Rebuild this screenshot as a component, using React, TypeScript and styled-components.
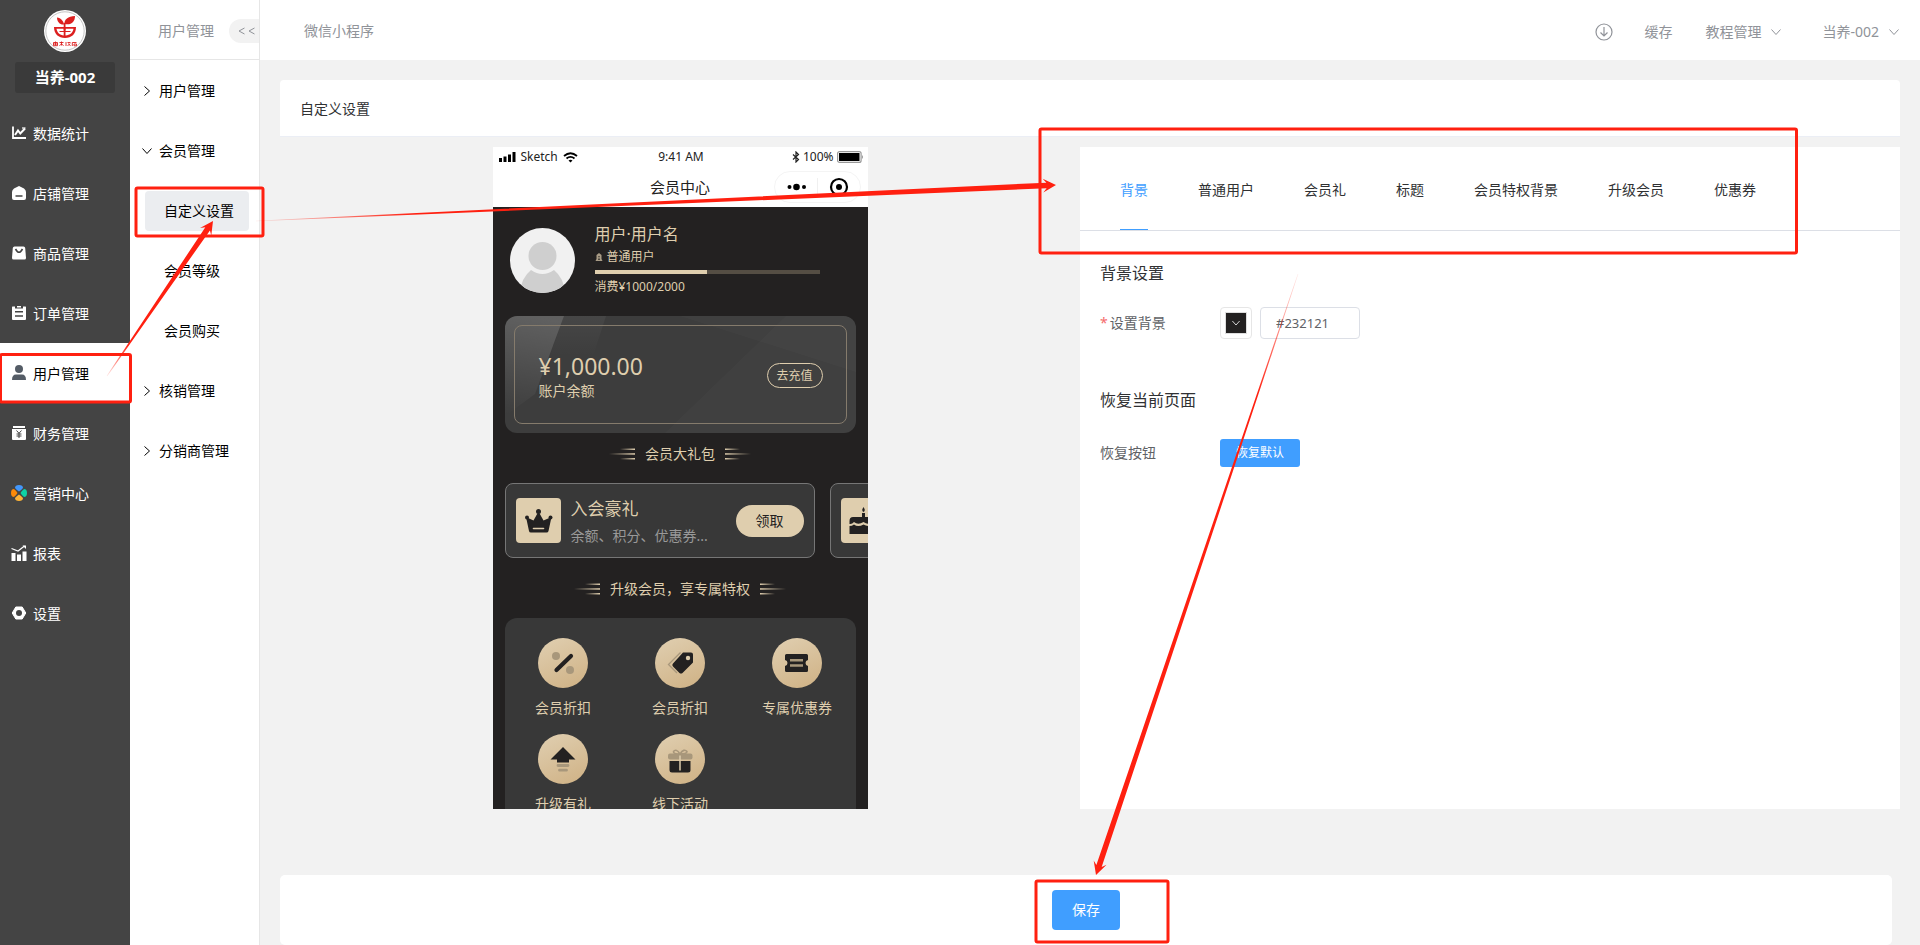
import React, { useState } from "react";
import styled, { createGlobalStyle, css } from "styled-components";

const GlobalStyle = createGlobalStyle`
  *, *::before, *::after { box-sizing: border-box; }
  body {
    margin: 0;
    background: #f2f2f2;
    color: #303133;
    font-family: "Noto Sans", "Noto Sans CJK SC", sans-serif;
    font-size: 14px;
    line-height: 20px;
  }
  button, input { font: inherit; }
  button { border: 0; padding: 0; background: none; color: inherit; cursor: pointer; }
  a { color: inherit; text-decoration: none; }
  h1, h2, p, ul { margin: 0; padding: 0; font-weight: 400; }
  ul { list-style: none; }
`;

const gold = "#dfceae";

/* ---------- Shell ---------- */

const Shell = styled.div`
  position: relative;
  display: flex;
  min-height: 100vh;
  overflow: hidden;
`;

const Sidebar = styled.aside`
  flex: none;
  width: 130px;
  background: #444;
  color: #fff;
`;

const Brand = styled.div`
  display: flex;
  flex-direction: column;
  align-items: center;
  gap: 10px;
  padding: 10px 15px;
`;

const ShopName = styled.strong`
  width: 100%;
  border-radius: 3px;
  background: #3a3a3a;
  font-size: 15px;
  line-height: 31px;
  text-align: center;
`;

const NavLink = styled.a<{ $active?: boolean }>`
  display: flex;
  align-items: center;
  gap: 6px;
  height: 60px;
  padding-left: 11px;
  ${(p) => p.$active && css`background: #fff; color: #000;`}
  svg { flex: none; }
  span { padding-top: 2px; }
`;

const SubNav = styled.aside`
  flex: none;
  width: 130px;
  border-right: 1px solid #e6e6e6;
  background: #fff;
  color: #000;
`;

const SubHeader = styled.div`
  display: flex;
  align-items: center;
  justify-content: space-between;
  height: 60px;
  padding: 2px 0 0 28px;
  border-bottom: 1px solid #e6e6e6;
  color: #909399;
`;

const Collapse = styled.button`
  width: 30px;
  height: 24px;
  border-radius: 12px 0 0 12px;
  background: #f2f2f2;
  color: #909399;
  svg { display: block; margin-left: 9px; }
`;

const SubList = styled.nav`
  display: flex;
  flex-direction: column;
  padding-top: 1px;
`;

const Group = styled.a`
  display: flex;
  align-items: center;
  gap: 7px;
  height: 60px;
  padding-left: 12px;
`;

const SubItem = styled.a<{ $active?: boolean }>`
  height: 40px;
  margin: 10px 10px 10px 15px;
  padding-left: 19px;
  border-radius: 4px;
  line-height: 40px;
  ${(p) => p.$active && css`background: #ebedf0;`}
`;

/* ---------- Main ---------- */

const Main = styled.main`
  display: flex;
  flex: 1;
  flex-direction: column;
  min-width: 0;
`;

const TopBar = styled.header`
  display: flex;
  align-items: center;
  justify-content: space-between;
  height: 60px;
  padding: 2px 21px 0 44px;
  background: #fff;
  color: #909399;
`;

const TopActions = styled.div`
  display: flex;
  align-items: center;
  padding-top: 2px;
`;

const TopButton = styled.button<{ $gap?: number }>`
  display: flex;
  align-items: center;
  gap: 10px;
  margin-left: ${(p) => p.$gap ?? 0}px;
`;

const Content = styled.div`
  display: flex;
  flex: 1;
  flex-direction: column;
  padding: 20px 20px 0;
`;

const TitleCard = styled.div`
  padding: 19px 20px 17px;
  border-bottom: 1px solid #ebeef5;
  border-radius: 4px 4px 0 0;
  background: #fff;
`;

const Columns = styled.div`
  display: grid;
  grid-template-columns: 80fr 82fr;
  height: 662px;
  margin: 10px 0 66px;
`;

const Footer = styled.div`
  display: flex;
  justify-content: center;
  margin: auto 8px 0 0;
  padding: 15px;
  border-radius: 5px;
  background: #fff;
`;

const SaveButton = styled.button`
  width: 68px;
  height: 40px;
  border-radius: 4px;
  background: #409eff;
  color: #fff;
`;

/* ---------- Settings panel ---------- */

const Panel = styled.section`
  background: #fff;
`;

const TabList = styled.div`
  display: flex;
  gap: 50px;
  height: 84px;
  padding-left: 40px;
  border-bottom: 1px solid #dcdfe6;
`;

const Tab = styled.button<{ $active: boolean }>`
  padding-top: 4px;
  border-bottom: 1px solid ${(p) => (p.$active ? "#409eff" : "transparent")};
  color: ${(p) => (p.$active ? "#409eff" : "#303133")};
  white-space: nowrap;
`;

const Form = styled.form`
  display: flex;
  flex-direction: column;
  gap: 47px;
  padding: 30px 20px;
`;

const SectionTitle = styled.h2`
  font-size: 16px;
  line-height: 24px;
`;

const Field = styled.div<{ $height: number }>`
  display: flex;
  align-items: center;
  height: ${(p) => p.$height}px;
  margin-top: 20px;
  color: #606266;
`;

const Label = styled.label`
  width: 120px;
`;

const Required = styled.span`
  margin-right: 2px;
  color: #f56c6c;
`;

const Swatch = styled.button`
  display: flex;
  align-items: center;
  justify-content: center;
  width: 32px;
  height: 32px;
  margin-right: 8px;
  border: 1px solid #e6e6e6;
  border-radius: 4px;
  span {
    display: flex;
    align-items: center;
    justify-content: center;
    width: 22px;
    height: 22px;
    border: 1px solid #dedede;
    background: #232121;
    color: #fff;
  }
`;

const ColorInput = styled.input`
  width: 100px;
  height: 32px;
  padding: 0 15px;
  border: 1px solid #dcdfe6;
  border-radius: 4px;
  background: none;
  color: #606266;
  font-size: 13px;
`;

const ResetButton = styled.button`
  width: 80px;
  height: 28px;
  border-radius: 3px;
  background: #409eff;
  color: #fff;
  font-size: 12px;
`;

/* ---------- Phone preview ---------- */

const Phone = styled.section`
  width: 375px;
  height: 662px;
  margin: 0 auto;
  overflow: hidden;
  background: #232121;
  color: ${gold};
`;

const PhoneTop = styled.div`
  height: 60px;
  background: #fff;
  color: #222;
`;

const StatusBar = styled.div`
  display: grid;
  grid-template-columns: 1fr auto 1fr;
  align-items: center;
  height: 20px;
  padding: 0 4px 0 6px;
  font-size: 12px;
`;

const StatusGroup = styled.div<{ $end?: boolean }>`
  display: flex;
  align-items: center;
  justify-content: ${(p) => (p.$end ? "flex-end" : "flex-start")};
  gap: ${(p) => (p.$end ? 3 : 5)}px;
`;

const PhoneNav = styled.div`
  display: grid;
  grid-template-columns: 1fr auto 1fr;
  align-items: center;
  height: 40px;
  padding: 0 7px;
  h2 { grid-column: 2; font-size: 15px; }
`;

const Capsule = styled.svg`
  justify-self: end;
`;

const Profile = styled.div`
  display: flex;
  align-items: center;
  gap: 20px;
  padding: 15px 17px 0;
`;

const ProfileText = styled.div`
  width: 225px;
  font-size: 12px;
`;

const UserName = styled.p`
  font-size: 16px;
  line-height: 24px;
`;

const Level = styled.p`
  display: flex;
  align-items: center;
  gap: 4px;
  padding-bottom: 2px;
  line-height: 22px;
`;

const Progress = styled.div`
  height: 4px;
  background: #554e44;
  div { width: 50%; height: 4px; background: ${gold}; }
`;

const Spend = styled.p`
  padding-top: 1px;
  line-height: 24px;
`;

const Wallet = styled.div`
  position: relative;
  margin: 17px 12px 0;
  padding: 9px;
  overflow: hidden;
  border-radius: 12px;
  background: #3d3d3d;
`;

const WalletShine = styled.svg`
  position: absolute;
  inset: 0;
`;

const WalletInner = styled.div`
  position: relative;
  display: flex;
  align-items: center;
  justify-content: space-between;
  height: 99px;
  padding: 2px 23px 0 24px;
  border: 1px solid #857b6c;
  border-radius: 8px;
`;

const Amount = styled.p`
  font-size: 23px;
  line-height: 30px;
`;

const Recharge = styled.button`
  width: 56px;
  height: 25px;
  border: 1px solid ${gold};
  border-radius: 13px;
  font-size: 12px;
`;

const SectionBar = styled.div`
  display: flex;
  align-items: center;
  justify-content: center;
  gap: 10px;
  height: 42px;
`;

const Gifts = styled.div`
  display: flex;
  gap: 15px;
  margin: 8px 0 10px;
  padding-left: 12px;
`;

const GiftCard = styled.div`
  display: flex;
  flex: none;
  align-items: center;
  width: 310px;
  height: 75px;
  padding: 0 10px;
  border: 1px solid #767676;
  border-radius: 8px;
  background: #383838;
`;

const GiftIcon = styled.div`
  display: flex;
  width: 45px;
  height: 45px;
  margin-right: 10px;
  border-radius: 4px;
  background: ${gold};
`;

const GiftText = styled.div`
  flex: 1;
  padding-top: 2px;
  strong { display: block; font-size: 17px; font-weight: 400; line-height: 28px; }
  span { display: block; color: #999; line-height: 26px; }
`;

const Claim = styled.button`
  width: 68px;
  height: 32px;
  border-radius: 16px;
  background: ${gold};
  color: #232121;
`;

const Perks = styled.ul`
  display: grid;
  grid-template-columns: repeat(3, 1fr);
  margin: 8px 12px 0;
  padding: 20px 0;
  border-radius: 12px 12px 0 0;
  background: #383838;
`;

const Perk = styled.li`
  display: flex;
  flex-direction: column;
  align-items: center;
  gap: 10px;
  height: 96px;
`;

const PerkBadge = styled.div`
  width: 50px;
  height: 50px;
  border-radius: 50%;
  background: linear-gradient(155deg, #e0cfb1, #cfb184);
`;

/* ---------- Annotation layer ---------- */

const Notes = styled.svg`
  position: absolute;
  top: 0;
  left: 0;
  pointer-events: none;
`;

/* ---------- Icons ---------- */

const Logo = () => (
  <svg width="42" height="42" viewBox="0 0 42 42">
    <circle cx="21" cy="21" r="21" fill="#fff" />
    <circle cx="21" cy="21" r="19.2" fill="none" stroke="#aaa" strokeWidth="0.7" />
    <g fill="#dc1f1f">
      <path d="M20.5 14 C20 9.500 24 6.500 31 6 C31 12 27 15.500 20.500 14Z" />
      <path d="M20 14.500 C19.500 11 17 8 13 7.500 C13 12 16 15 20 14.500Z" />
      <path d="M10 17 H32 C32 24 27.500 28 21 28 S10 24 10 17Z" />
      <path d="M12.500 18.800 H19.700 V21 H15.500 V22 H19.700 V25.500 C16 25.200 13 22.500 12.500 18.800Z M21.500 18.800 H29.500 C29 22.500 26 25.200 21.500 25.500 V22 H26.500 V21 H21.500Z" fill="#fff" />
      <path d="M19.700 13 H21.500 V20.500 H19.700Z" />
    </g>
    <path d="M9.500 32.500h4v3.200h-4z M9.500 34h4 M11.500 31.500v4 M15.500 32.500h4 M17.500 31.500v4 M15.500 35.800l2-2 2 2 M22 32v4 M23.500 32.500h3 M24.500 33.500l2 2.500 M26 33.500l-2.500 2.500 M28.300 32.500h4.200 M28.300 32.500v3.500 M30 34h2.500v1.800h-2.500z" fill="none" stroke="#dc1f1f" strokeWidth="0.9" />
  </svg>
);

const navIcons: Record<string, React.ReactNode> = {
  stats: (
    <g fill="none" stroke="#fff" strokeWidth="1.800">
      <path d="M2 1.500V13H15" />
      <path d="M4 10 L7 5.500 L9.300 8.500 L14 3.500" strokeWidth="2" />
      <path d="M11 3h3.500" strokeWidth="1.200" />
    </g>
  ),
  shop: (
    <>
      <path d="M8 1 L13 3.500 Q15 5 15 7 V13 Q15 15 13 15 H3 Q1 15 1 13 V7 Q1 5 3 3.500Z" fill="#fff" />
      <path d="M4.500 11h7" stroke="#444" strokeWidth="1.500" />
    </>
  ),
  goods: (
    <>
      <path d="M3.500 1.500h9q1.500 0 1.700 1.500L15 13q0 1.500-1.500 1.500h-11Q1 14.500 1 13L1.800 3q.2-1.500 1.700-1.500Z" fill="#fff" />
      <path d="M4.500 4 Q8 10.500 11.500 4" fill="none" stroke="#444" strokeWidth="1.600" />
    </>
  ),
  orders: (
    <>
      <path d="M1.500 1.500h2.500v2h8v-2h2.500q.5 0 .5 1v11.500q0 1-1 1h-12q-1 0-1-1V2.500q0-1 .5-1Z M6 1h4v1.500H6z" fill="#fff" />
      <path d="M4 6.800h8 M4 11h8" stroke="#444" strokeWidth="1.500" />
    </>
  ),
  users: (
    <g fill="#545c66">
      <circle cx="8" cy="4" r="4" />
      <path d="M1 15 Q1 9.500 5 9.500 H11 Q15 9.500 15 15Z" />
    </g>
  ),
  finance: (
    <>
      <path d="M2 1h12v2H2z M1 4h14v10q0 1-1 1H2q-1 0-1-1Z" fill="#fff" />
      <path d="M5.500 5.500 L8 8.300 L10.500 5.500 M8 8.300V13 M5.500 9h5 M5.500 11h5" fill="none" stroke="#444" strokeWidth="1" />
    </>
  ),
  marketing: (
    <>
      <path d="M4 3 Q4 0 8 0 T12 3 Q10 5.500 8 6.500 Q6 5.500 4 3Z" fill="#4297fb" />
      <path d="M3 4 Q0 4 0 8 T3 12 Q5.500 10 6.500 8 Q5.500 6 3 4Z" fill="#fb8a0a" />
      <path d="M13 4 Q16 4 16 8 T13 12 Q10.500 10 9.500 8 Q10.500 6 13 4Z" fill="#0ed2a5" />
      <path d="M4 13 Q4 16 8 16 T12 13 Q10 10.500 8 9.500 Q6 10.500 4 13Z" fill="#fdb337" />
    </>
  ),
  report: (
    <>
      <path d="M0.500 8h4v8h-4z M6 9.500h4V16H6z M11.500 6.500h4V16h-4z" fill="#fff" />
      <path d="M0.500 3.500 L7 6 L13.500 1" fill="none" stroke="#fff" strokeWidth="1.200" />
      <path d="M11.500 0.500 H15 V4Z" fill="#fff" />
    </>
  ),
  settings: (
    <>
      <path d="M4.800 2h6.400L14.800 8l-3.600 6H4.800L1.200 8Z" fill="#fff" stroke="#fff" strokeLinejoin="round" />
      <circle cx="8" cy="8" r="3" fill="#444" />
    </>
  ),
};

const NavIcon = ({ name }: { name: string }) => (
  <svg width="16" height="16" viewBox="0 0 16 16">{navIcons[name]}</svg>
);

const Chevron = ({ down, size = 10 }: { down?: boolean; size?: number }) => (
  <svg width={size} height={size} viewBox="0 0 10 10" fill="none" stroke="currentColor">
    <path d={down ? "M0.500 2.500 L5 7.500 L9.500 2.500" : "M2.500 0.500 L7.500 5 L2.500 9.500"} />
  </svg>
);

const CollapseIcon = () => (
  <svg width="18" height="10" viewBox="0 0 18 10" fill="none" stroke="currentColor">
    <path d="M6.500 2 L1 5 L6.500 8 M16.500 2 L11 5 L16.500 8" />
  </svg>
);

const DownloadIcon = () => (
  <svg width="18" height="18" viewBox="0 0 18 18" fill="none" stroke="currentColor" strokeWidth="1.200">
    <circle cx="9" cy="9" r="8" />
    <path d="M9 4v9 M5.500 9.500 L9 13 L12.500 9.500" />
  </svg>
);

const Avatar = () => (
  <svg width="65" height="65" viewBox="0 0 65 65">
    <defs>
      <clipPath id="avatar"><circle cx="32.500" cy="32.500" r="32.500" /></clipPath>
    </defs>
    <g clipPath="url(#avatar)">
      <rect width="65" height="65" fill="#f1f1f1" />
      <circle cx="32.500" cy="28" r="14" fill="#cfcfcf" />
      <path d="M10 65 Q11 50 21 42 Q32.500 50 44 42 Q54 50 55 65Z" fill="#cfcfcf" />
    </g>
  </svg>
);

const Shine = () => (
  <WalletShine width="351" height="117" viewBox="0 0 351 117">
    <defs>
      <linearGradient id="shine" x1="0.3" y1="0" x2="0.2" y2="1">
        <stop offset="0" stopColor="#fff" stopOpacity="0.180" />
        <stop offset="1" stopColor="#fff" stopOpacity="0" />
      </linearGradient>
      <linearGradient id="shineSoft" x1="0" y1="0" x2="0" y2="1">
        <stop offset="0" stopColor="#fff" stopOpacity="0.050" />
        <stop offset="1" stopColor="#fff" stopOpacity="0" />
      </linearGradient>
    </defs>
    <path d="M0 0H59L30 78L0 100Z" fill="url(#shine)" />
    <path d="M59 0H101L88 40L45 40Z" fill="url(#shineSoft)" />
    <path d="M175 0H351V56Z" fill="#fff" fillOpacity="0.020" />
    <path d="M281 0H351V117H160Z" fill="#fff" fillOpacity="0.020" />
  </WalletShine>
);

const Rays = ({ flip }: { flip?: boolean }) => (
  <svg width="26" height="12" viewBox="0 0 26 12">
    <defs>
      <linearGradient id={flip ? "rayR" : "rayL"} x1={flip ? 1 : 0} x2={flip ? 0 : 1}>
        <stop offset="0" stopColor={gold} stopOpacity="0" />
        <stop offset="1" stopColor={gold} />
      </linearGradient>
    </defs>
    <g fill={`url(#${flip ? "rayR" : "rayL"})`}>
      <rect x={flip ? 0 : 11} y="0.500" width="15" height="1.500" />
      <rect x="0" y="5.200" width="26" height="1.500" />
      <rect x={flip ? 0 : 11} y="10" width="15" height="1.500" />
    </g>
  </svg>
);

const Crown = () => (
  <svg width="45" height="45" viewBox="0 0 45 45" fill="#232121">
    <path d="M10 19 L17.500 22.500 L22.500 13.500 L27.500 22.500 L35.500 19 L32.500 33 Q32.200 34.500 30.500 34.500 H15 Q13.200 34.500 13 33Z" />
    <circle cx="22.500" cy="13.500" r="2.500" />
    <circle cx="11" cy="19.500" r="2" />
    <circle cx="34.500" cy="19.500" r="2" />
    <path d="M17.500 30.500h10" stroke={gold} strokeWidth="1.600" strokeLinecap="round" />
  </svg>
);

const Cake = () => (
  <svg width="45" height="45" viewBox="0 0 45 45" fill="#232121">
    <path d="M22.500 9 Q25 12.500 22.500 14 Q20 12.500 22.500 9Z M21 15h3v5h-3z" />
    <path d="M8.500 36 V28 Q11 28 13 26.500 Q17 29.500 22.500 26.500 Q28 29.500 32 26.500 Q34 28 36.500 28 V36Z" />
    <path d="M8.500 26 V23 Q8.500 19 12 19 H33 Q36.500 19 36.500 23 V26 Q34 26.500 32 24 Q28 27.500 22.500 24 Q17 27.500 13 24 Q11 26.500 8.500 26Z" />
  </svg>
);

const perkIcons: Record<string, React.ReactNode> = {
  percent: (
    <>
      <circle cx="18" cy="18" r="4" fill="#a8977b" />
      <circle cx="32" cy="32" r="4" fill="#a8977b" />
      <path d="M18.500 32 L33 18" stroke="#232121" strokeWidth="4.200" strokeLinecap="round" />
    </>
  ),
  tag: (
    <>
      <path d="M25.500 14.500 L13.500 26.500 L22 35" fill="none" stroke="#a8977b" strokeWidth="1.300" />
      <path d="M28 14.500 H36 Q38 14.500 38 16.500 V24.500 L27.500 35 Q26 36.200 24.500 35 L18 28.500 Q16.500 27 18 25.500Z" fill="#232121" />
      <circle cx="33" cy="20" r="2.200" fill={gold} />
    </>
  ),
  ticket: (
    <>
      <path d="M14.500 16 H34.500 Q36 16 36 17.500 V22 Q33.500 22.500 33.500 25 T36 28 V32.500 Q36 34 34.500 34 H14.500 Q13 34 13 32.500 V28 Q15.500 27.500 15.500 25 T13 22 V17.500 Q13 16 14.500 16Z" fill="#232121" />
      <path d="M18 22.200h13 M18 27.500h13" stroke="#a8977b" strokeWidth="2.400" />
    </>
  ),
  upgrade: (
    <>
      <path d="M25 13 L37.500 25.500 H31 V28.500 H19 V25.500 H12.500Z" fill="#232121" />
      <path d="M20 31.500h10 M21.500 36.200h7" stroke="#a8977b" strokeWidth="2.800" strokeLinecap="round" />
    </>
  ),
  gift: (
    <>
      <rect x="13" y="19.500" width="24.500" height="6" rx="2" fill="#a8977b" />
      <path d="M25 20 Q18 20 18.500 17.500 Q21 14 25 20 Q29 14 32 17.500 Q32 20 25 20Z" fill="none" stroke="#a8977b" strokeWidth="1.600" />
      <path d="M14.500 27 H35.500 V36 Q35.500 38.500 33 38.500 H17 Q14.500 38.500 14.500 36Z" fill="#232121" />
      <path d="M25 21.500V36.500" stroke={gold} strokeWidth="1.500" />
    </>
  ),
};

/* A tapered arrow that fades in from its tail. */
const Arrow = ({ id, from, to }: { id: string; from: [number, number]; to: [number, number] }) => {
  const [x1, y1] = from;
  const [x2, y2] = to;
  const len = Math.hypot(x2 - x1, y2 - y1);
  const ux = (x2 - x1) / len;
  const uy = (y2 - y1) / len;
  const at = (back: number, side: number) =>
    `${x2 - ux * back - uy * side},${y2 - uy * back + ux * side}`;
  const points = [at(len, 0.3), at(9.5, 2.8), at(13, 6.8), at(0, 0), at(13, -6.8), at(9.5, -2.8), at(len, -0.3)];
  return (
    <>
      <linearGradient id={id} gradientUnits="userSpaceOnUse" x1={x1} y1={y1} x2={x2} y2={y2}>
        <stop offset="0" stopColor="#ff2010" stopOpacity="0.100" />
        <stop offset="0.200" stopColor="#ff2010" />
      </linearGradient>
      <polygon points={points.join(" ")} fill={`url(#${id})`} />
    </>
  );
};

/* ---------- Data ---------- */

const navItems = [
  ["stats", "数据统计"],
  ["shop", "店铺管理"],
  ["goods", "商品管理"],
  ["orders", "订单管理"],
  ["users", "用户管理"],
  ["finance", "财务管理"],
  ["marketing", "营销中心"],
  ["report", "报表"],
  ["settings", "设置"],
];

const tabs = ["背景", "普通用户", "会员礼", "标题", "会员特权背景", "升级会员", "优惠券"];

const perks = [
  ["percent", "会员折扣"],
  ["tag", "会员折扣"],
  ["ticket", "专属优惠券"],
  ["upgrade", "升级有礼"],
  ["gift", "线下活动"],
];

const PhonePreview = () => (
  <Phone>
    <PhoneTop>
      <StatusBar>
        <StatusGroup>
          <svg width="17" height="10" viewBox="0 0 17 10">
            <path d="M0 6h3v4H0z M4.500 4.500h3V10h-3z M9 2.500h3V10H9z M13.500 0h3v10h-3z" />
          </svg>
          Sketch
          <svg width="15" height="11" viewBox="0 0 15 11" fill="none" stroke="#000" strokeWidth="1.800">
            <path d="M1 4 Q7.500 -1.500 14 4 M3.500 6.500 Q7.500 3.200 11.500 6.500" />
            <path d="M5.500 8.500 Q7.500 7 9.500 8.500 L7.500 10.500Z" fill="#000" stroke="none" />
          </svg>
        </StatusGroup>
        <span>9:41 AM</span>
        <StatusGroup $end>
          <svg width="8" height="12" viewBox="0 0 8 12" fill="none" stroke="#222" strokeWidth="1.200">
            <path d="M1 3.500 L6.500 8.500 L4 11 V1 L6.500 3.500 L1 8.500" />
          </svg>
          100%
          <svg width="27" height="12" viewBox="0 0 27 12">
            <rect x="0.600" y="0.600" width="23.500" height="10.800" rx="2" fill="#fff" stroke="#999" strokeWidth="1.200" />
            <rect x="2" y="2" width="20.500" height="8" />
            <path d="M25 4 Q27 6 25 8Z" fill="#999" />
          </svg>
        </StatusGroup>
      </StatusBar>
      <PhoneNav>
        <h2>会员中心</h2>
        <Capsule width="87" height="32" viewBox="0 0 87 32">
          <rect x="0.500" y="0.500" width="86" height="31" rx="15.500" fill="#fff" stroke="#f4f4f4" />
          <path d="M43.500 7v18" stroke="#f0f0f0" />
          <circle cx="15.500" cy="16" r="2" />
          <circle cx="22.500" cy="16" r="3.300" />
          <circle cx="30" cy="16" r="2" />
          <circle cx="65" cy="16" r="8" fill="none" stroke="#000" strokeWidth="2.200" />
          <circle cx="65" cy="16" r="3" />
        </Capsule>
      </PhoneNav>
    </PhoneTop>

    <Profile>
      <Avatar />
      <ProfileText>
        <UserName>用户·用户名</UserName>
        <Level>
          <svg width="8" height="8" viewBox="0 0 8 8">
            <path d="M1.500 2 L4 0 L6.500 2 V6 L7.500 8 H0.500 L1.500 6Z" fill="#a99c86" />
            <path d="M3 3.200h2v1H3z M3 5.500h2V7H3z" fill="#4c463d" />
          </svg>
          普通用户
        </Level>
        <Progress><div /></Progress>
        <Spend>消费¥1000/2000</Spend>
      </ProfileText>
    </Profile>

    <Wallet>
      <Shine />
      <WalletInner>
        <div>
          <Amount>¥1,000.00</Amount>
          <p>账户余额</p>
        </div>
        <Recharge type="button">去充值</Recharge>
      </WalletInner>
    </Wallet>

    <SectionBar>
      <Rays /><span>会员大礼包</span><Rays flip />
    </SectionBar>

    <Gifts>
      <GiftCard>
        <GiftIcon><Crown /></GiftIcon>
        <GiftText>
          <strong>入会豪礼</strong>
          <span>余额、积分、优惠券...</span>
        </GiftText>
        <Claim type="button">领取</Claim>
      </GiftCard>
      <GiftCard>
        <GiftIcon><Cake /></GiftIcon>
      </GiftCard>
    </Gifts>

    <SectionBar>
      <Rays /><span>升级会员，享专属特权</span><Rays flip />
    </SectionBar>

    <Perks>
      {perks.map(([icon, label], i) => (
        <Perk key={i}>
          <PerkBadge>
            <svg width="50" height="50" viewBox="0 0 50 50">{perkIcons[icon]}</svg>
          </PerkBadge>
          {label}
        </Perk>
      ))}
    </Perks>
  </Phone>
);

export default function App() {
  const [tab, setTab] = useState(0);
  const [color, setColor] = useState("#232121");

  return (
    <Shell>
      <GlobalStyle />
      <Sidebar>
        <Brand>
          <Logo />
          <ShopName>当养-002</ShopName>
        </Brand>
        <nav>
          {navItems.map(([icon, label]) => (
            <NavLink key={icon} href="#" $active={icon === "users"}>
              <NavIcon name={icon} />
              <span>{label}</span>
            </NavLink>
          ))}
        </nav>
      </Sidebar>

      <SubNav>
        <SubHeader>
          用户管理
          <Collapse type="button" aria-label="收起"><CollapseIcon /></Collapse>
        </SubHeader>
        <SubList>
          <Group href="#"><Chevron />用户管理</Group>
          <Group href="#"><Chevron down />会员管理</Group>
          <SubItem href="#" $active>自定义设置</SubItem>
          <SubItem href="#">会员等级</SubItem>
          <SubItem href="#">会员购买</SubItem>
          <Group href="#"><Chevron />核销管理</Group>
          <Group href="#"><Chevron />分销商管理</Group>
        </SubList>
      </SubNav>

      <Main>
        <TopBar>
          <span>微信小程序</span>
          <TopActions>
            <TopButton type="button" aria-label="下载"><DownloadIcon /></TopButton>
            <TopButton type="button" $gap={31}>缓存</TopButton>
            <TopButton type="button" $gap={33}>教程管理<Chevron down /></TopButton>
            <TopButton type="button" $gap={41}>当养-002<Chevron down /></TopButton>
          </TopActions>
        </TopBar>

        <Content>
          <TitleCard>自定义设置</TitleCard>
          <Columns>
            <PhonePreview />
            <Panel>
              <TabList role="tablist">
                {tabs.map((name, i) => (
                  <Tab key={name} type="button" role="tab" aria-selected={i === tab} $active={i === tab} onClick={() => setTab(i)}>
                    {name}
                  </Tab>
                ))}
              </TabList>
              <Form onSubmit={(e) => e.preventDefault()}>
                <div>
                  <SectionTitle>背景设置</SectionTitle>
                  <Field $height={36}>
                    <Label htmlFor="bg-color"><Required>*</Required>设置背景</Label>
                    <Swatch type="button" aria-label="选择颜色"><span><Chevron down size={8} /></span></Swatch>
                    <ColorInput id="bg-color" value={color} onChange={(e) => setColor(e.target.value)} />
                  </Field>
                </div>
                <div>
                  <SectionTitle>恢复当前页面</SectionTitle>
                  <Field $height={42}>
                    <Label htmlFor="reset">恢复按钮</Label>
                    <ResetButton id="reset" type="button" onClick={() => setColor("#232121")}>恢复默认</ResetButton>
                  </Field>
                </div>
              </Form>
            </Panel>
          </Columns>
          <Footer>
            <SaveButton type="button">保存</SaveButton>
          </Footer>
        </Content>
      </Main>

      <Notes width="1920" height="945" viewBox="0 0 1920 945" aria-hidden="true">
        <g fill="none" stroke="#ff2010" strokeWidth="3">
          <rect x="0.500" y="354.500" width="130" height="47.500" rx="1.500" />
          <rect x="136" y="188" width="127" height="48" rx="1.500" />
          <rect x="1040" y="129" width="756.500" height="124" rx="1.500" />
          <rect x="1036" y="881" width="132" height="61" rx="1.500" />
        </g>
        <Arrow id="note1" from={[107, 376]} to={[213, 221]} />
        <Arrow id="note2" from={[256, 221]} to={[1056, 185]} />
        <Arrow id="note3" from={[1298, 274]} to={[1096, 875]} />
      </Notes>
    </Shell>
  );
}
